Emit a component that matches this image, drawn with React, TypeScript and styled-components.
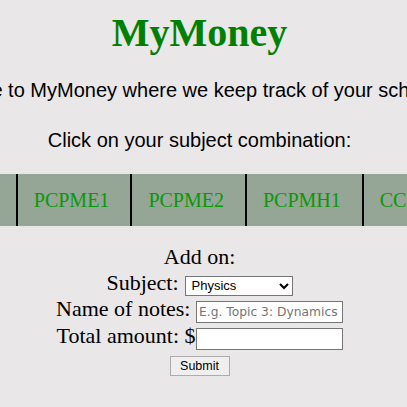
import * as React from 'react';
import styled, { createGlobalStyle } from 'styled-components';

const GlobalStyle = createGlobalStyle`
  html, body {
    margin: 0;
    padding: 0;
    background: #e9e7e8;
    overflow: hidden;
  }
`;

const Page = styled.div`
  display: flex;
  flex-direction: column;
  align-items: center;
  width: 399px;
  padding-right: 8px;
  padding-top: 10px;
  text-align: center;
`;

const Title = styled.h1`
  margin: 0;
  font-family: 'Liberation Serif', 'Times New Roman', serif;
  font-weight: bold;
  font-size: 40px;
  line-height: 46px;
  color: #008000;
`;

const Intro = styled.p<{ gap: number }>`
  margin: ${p => p.gap}px 0 0;
  white-space: nowrap;
  font-family: 'Liberation Sans', Arial, sans-serif;
  font-size: 20px;
  line-height: 23px;
  color: #000;
`;

const NavBar = styled.nav`
  box-sizing: border-box;
  margin-top: 22px;
  width: 1000px;
  height: 52px;
  padding-left: 7px;
  background: #95a596;
  display: flex;
  justify-content: center;
`;

const NavItem = styled.a`
  display: flex;
  align-items: center;
  padding: 0 21px 0 16px;
  border-right: 2px solid #000;
  font-family: 'Liberation Serif', 'Times New Roman', serif;
  font-size: 20px;
  color: #079a07;
  text-decoration: none;
  white-space: nowrap;
`;

const Form = styled.form`
  margin-top: 18px;
  font-family: 'Liberation Serif', 'Times New Roman', serif;
  font-size: 22px;
  color: #000;
`;

const Row = styled.div`
  line-height: 26px;
  white-space: nowrap;
`;

const Select = styled.select`
  box-sizing: border-box;
  width: 108px;
  height: 20px;
  margin-left: 6px;
  padding: 0 0 0 2px;
  border: 1px solid #767676;
  border-radius: 0;
  background: #fff;
  font-family: 'Liberation Sans', Arial, sans-serif;
  font-size: 13px;
  color: #000;
  vertical-align: baseline;
`;

const TextInput = styled.input`
  box-sizing: border-box;
  width: 147px;
  height: 22px;
  padding: 1px 2px;
  border: 1px solid #767676;
  border-radius: 0;
  background: #fff;
  font-family: 'DejaVu Sans', Verdana, sans-serif;
  font-size: 12.3px;
  vertical-align: baseline;
  &::placeholder {
    color: #757575;
  }
`;

const SubmitButton = styled.button`
  box-sizing: border-box;
  width: 60px;
  height: 20px;
  margin-top: 1px;
  padding: 0;
  border: 1px solid #acacac;
  border-radius: 0;
  background: #efefef;
  font-family: 'Liberation Sans', Arial, sans-serif;
  font-size: 12.5px;
  color: #000;
`;

const combos = ['PCMB', 'PCPME1', 'PCPME2', 'PCPMH1', 'CCPMH1'];

export default function App() {
  return (
    <>
      <GlobalStyle />
      <Page>
        <Title>MyMoney</Title>
        <Intro gap={23}>Welcome to MyMoney where we keep track of your school fees</Intro>
        <Intro gap={27}>Click on your subject combination:</Intro>
        <NavBar>
          {combos.map(c => (
            <NavItem key={c} href="#">
              {c}
            </NavItem>
          ))}
        </NavBar>
        <Form onSubmit={e => e.preventDefault()}>
          <Row>Add on:</Row>
          <Row>
            Subject:
            <Select defaultValue="Physics">
              <option>Physics</option>
              <option>Chemistry</option>
              <option>Mathematics</option>
              <option>Economics</option>
            </Select>
          </Row>
          <Row>
            Name of notes: <TextInput type="text" placeholder="E.g. Topic 3: Dynamics" />
          </Row>
          <Row>
            Total amount: $<TextInput type="text" />
          </Row>
          <Row>
            <SubmitButton type="submit">Submit</SubmitButton>
          </Row>
        </Form>
      </Page>
    </>
  );
}
